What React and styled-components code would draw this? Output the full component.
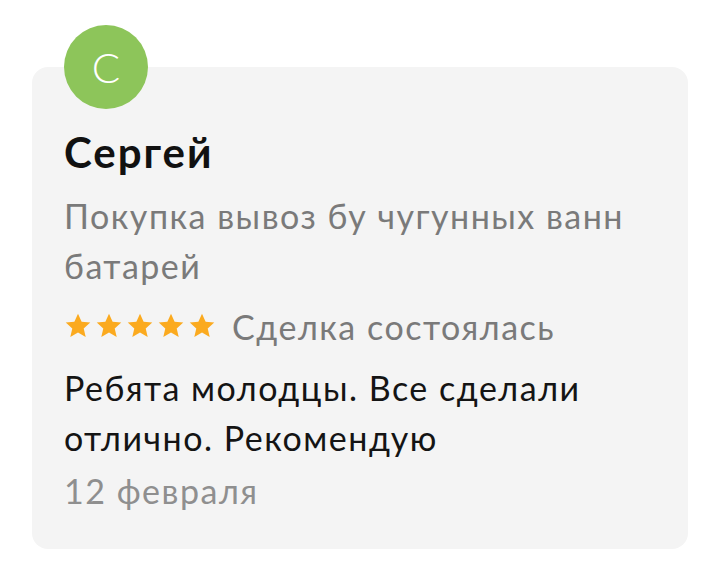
import React from 'react';
import styled, { createGlobalStyle } from 'styled-components';

const GlobalStyle = createGlobalStyle`
   body {
      margin: 0;
      background: #ffffff;
      font-family: Lato, "Noto Sans", sans-serif;
   }
`;

const Page = styled.div`
   padding: 67px 32px 20px;
`;

const Card = styled.div`
   display: flex;
   flex-direction: column;
   align-items: flex-start;
   background-color: #f4f4f4;
   border-radius: 16px;
   padding: 0 32px 33px;
`;

const Avatar = styled.div`
   width: 84px;
   height: 84px;
   margin-top: -42px;
   border-radius: 50%;
   background-color: #8dc55a;
   color: #ffffff;
   display: flex;
   align-items: center;
   justify-content: center;
   font-size: 42px;
   font-weight: 300;
`;

const Name = styled.h2`
   margin: 18px 0 0;
   font-size: 42px;
   line-height: 50px;
   letter-spacing: 2px;
   font-weight: 700;
   color: #111111;
`;

const Text = styled.p`
   margin: ${({ gap }) => gap || 0}px 0 0;
   font-size: 34px;
   line-height: 50px;
   letter-spacing: 1.5px;
   color: ${({ tone }) => tone || '#141414'};
`;

const RatingRow = styled.div`
   display: flex;
   align-items: center;
   gap: 16px;
   margin-top: 10px;
   height: 50px;
   font-size: 34px;
   letter-spacing: 1.5px;
   color: #7a7a7a;
`;

const Stars = styled.div`
   display: flex;
   gap: 3px;
`;

const Star = () => (
   <svg width="28" height="28" viewBox="0 0 24 24">
      <path
         d="M12 1.5l3.1 6.9 7.4.7-5.6 5 1.7 7.4L12 17.6l-6.6 3.9 1.7-7.4-5.6-5 7.4-.7z"
         fill="#fbaa1f"
      />
   </svg>
);

const App = () => (
   <Page>
      <GlobalStyle />
      <Card>
         <Avatar>С</Avatar>
         <Name>Сергей</Name>
         <Text gap={14} tone="#7a7a7a">
            Покупка вывоз бу чугунных ванн батарей
         </Text>
         <RatingRow>
            <Stars>
               {[0, 1, 2, 3, 4].map((i) => (
                  <Star key={i} />
               ))}
            </Stars>
            Сделка состоялась
         </RatingRow>
         <Text gap={12}>Ребята молодцы. Все сделали отлично. Рекомендую</Text>
         <Text gap={3} tone="#8f8f8f">
            12 февраля
         </Text>
      </Card>
   </Page>
);

export default App;
